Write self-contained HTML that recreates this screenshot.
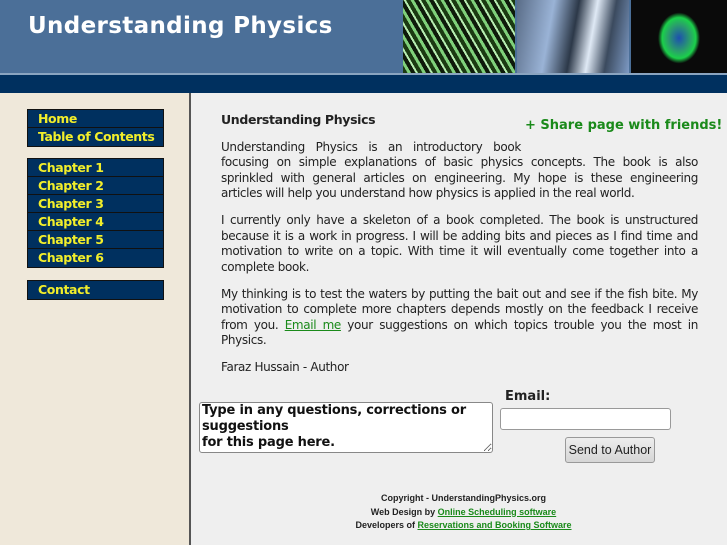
<!DOCTYPE html>
<html><head><meta charset="utf-8"><style>
*{margin:0;padding:0;box-sizing:border-box}
body{width:727px;height:545px;overflow:hidden;font-family:"DejaVu Sans",Verdana,sans-serif;background:#efefef;position:relative}
#hdr{position:absolute;left:0;top:0;width:727px;height:73px;background:#4b6f98}
#hdr h1{position:absolute;left:28px;top:13px;color:#fff;font-size:23px;font-weight:bold;letter-spacing:0.35px}
.img{position:absolute;top:0;height:73px}
#band{position:absolute;left:0;top:73px;width:727px;height:20px;background:#00305f;border-top:2px solid #8aa4c0}
#side{position:absolute;left:0;top:93px;width:191px;height:452px;background:#efe8da;border-right:2px solid #555}
.nav{position:absolute;left:27px;width:137px;border:1px solid #111}
.nav div{height:18px;background:#00305f;color:#f2ee2a;font-size:12.5px;font-weight:bold;padding-left:10px;line-height:17px;border-bottom:1px solid #111;letter-spacing:-0.4px;white-space:nowrap}
.nav div:last-child{border-bottom:none}
#main{position:absolute;left:221px;top:112px;width:477px;font-size:12px;color:#222;line-height:15.5px;text-align:justify;letter-spacing:-0.35px}
#main p{margin-bottom:11.5px}
a{color:#1a8a1a}
#share{position:absolute;left:525px;top:118px;font-size:13px;font-weight:bold;color:#1a8a1a;text-decoration:none}
textarea{position:absolute;left:199px;top:402px;width:294px;height:51px;font-family:"DejaVu Sans",sans-serif;font-size:13px;font-weight:bold;line-height:16px;border:1px solid #888;border-radius:3px;padding:0 2px;resize:both;background:#fff;color:#111;overflow:hidden;letter-spacing:-0.2px}
#em{position:absolute;left:505px;top:389px;font-size:13px;font-weight:bold;color:#222}
#ein{position:absolute;left:500px;top:408px;width:171px;height:22px;border:1px solid #999;border-radius:3px;background:#fff}
#btn{position:absolute;left:565px;top:437px;width:90px;height:26px;border:1px solid #999;border-radius:3px;background:linear-gradient(#eee,#d6d6d6);font-family:"Liberation Sans",Arial,sans-serif;font-size:12.5px;color:#222;text-align:center;line-height:24px}
#ft{position:absolute;left:300px;top:492px;width:327px;text-align:center;font-family:"Liberation Sans",Arial,sans-serif;font-size:9px;font-weight:bold;line-height:13.5px;color:#222}
</style></head><body>
<div id="hdr"><h1>Understanding Physics</h1>
<div class="img" style="left:403px;width:112px;background:repeating-linear-gradient(60deg,#1b3a12 0 4px,#7fd07a 4px 7px,#0e1a0a 7px 11px,#b6ecb0 11px 13px)"></div>
<div class="img" style="left:517px;width:112px;background:linear-gradient(100deg,#5a6d88 0,#9ab3d6 30%,#2c3848 50%,#dfe9f5 65%,#3b4a5e 80%,#7d9ac4 100%)"></div>
<div class="img" style="left:631px;width:96px;background:radial-gradient(ellipse 28px 34px at 48px 38px,#1d4fb0 0,#2aa06a 40%,#1bd04a 60%,#0a0a0a 75%)"></div>
</div>
<div id="band"></div>
<div id="side">
<div class="nav" style="top:16px"><div>Home</div><div>Table of Contents</div></div>
<div class="nav" style="top:65px"><div>Chapter 1</div><div>Chapter 2</div><div>Chapter 3</div><div>Chapter 4</div><div>Chapter 5</div><div>Chapter 6</div></div>
<div class="nav" style="top:187px"><div>Contact</div></div>
</div>
<a id="share">+ Share page with friends!</a>
<div id="main">
<p style="font-weight:bold;font-size:12.5px;margin-bottom:12px">Understanding Physics</p>
<p><span style="display:block;width:300px;text-align:justify;text-align-last:justify">Understanding Physics is an introductory book</span>focusing on simple explanations of basic physics concepts. The book is also sprinkled with general articles on engineering. My hope is these engineering articles will help you understand how physics is applied in the real world.</p>
<p>I currently only have a skeleton of a book completed. The book is unstructured because it is a work in progress. I will be adding bits and pieces as I find time and motivation to write on a topic. With time it will eventually come together into a complete book.</p>
<p>My thinking is to test the waters by putting the bait out and see if the fish bite. My motivation to complete more chapters depends mostly on the feedback I receive from you. <a href="#">Email me</a> your suggestions on which topics trouble you the most in Physics.</p>
<p>Faraz Hussain - Author</p>
</div>
<textarea>Type in any questions, corrections or suggestions
for this page here.</textarea>
<div id="em">Email:</div>
<div id="ein"></div>
<div id="btn">Send to Author</div>
<div id="ft">Copyright - UnderstandingPhysics.org<br>Web Design by <a href="#">Online Scheduling software </a><br>Developers of <a href="#">Reservations and Booking Software</a></div>
</body></html>
